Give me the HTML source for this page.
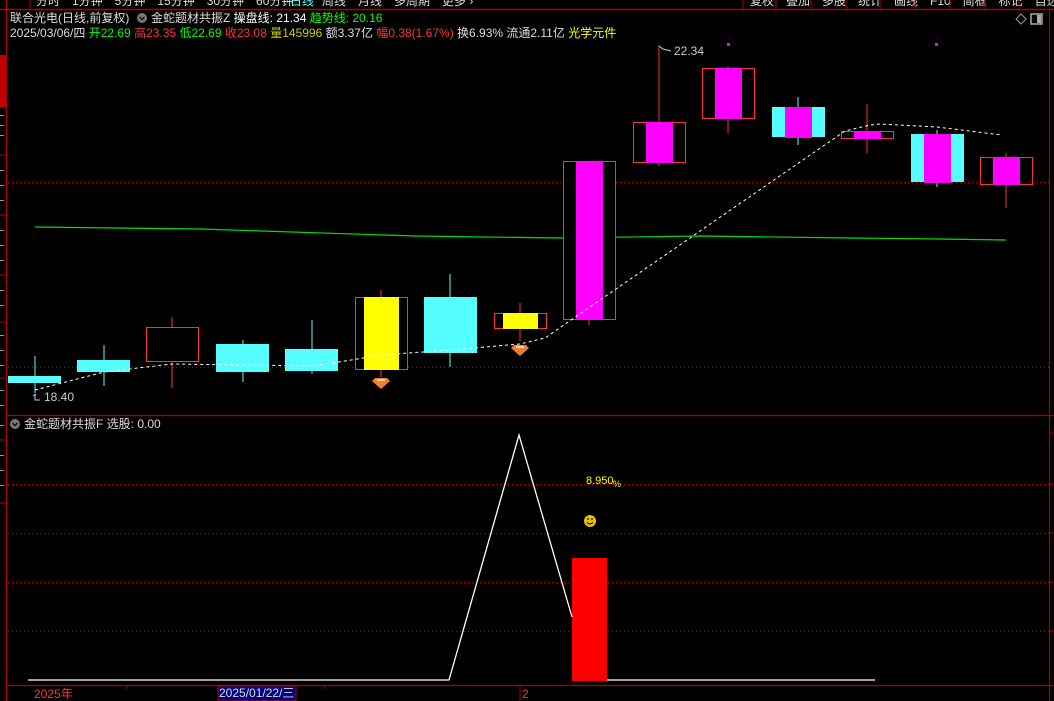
<!DOCTYPE html>
<html><head><meta charset="utf-8"><style>
html,body{margin:0;padding:0;background:#000;width:1054px;height:701px;overflow:hidden;font-family:"Liberation Sans","Noto Sans CJK SC",sans-serif}
.t{position:absolute;font-size:12px;white-space:nowrap;line-height:14px}
</style></head><body>
<svg width="1054" height="701" style="position:absolute;left:0;top:0" font-family="Liberation Sans, Noto Sans CJK SC, sans-serif">
<line x1="0" y1="9.5" x2="1054" y2="9.5" stroke="#b00000" stroke-width="1.5"/>
<g fill="#ddd" font-size="12">
<text x="36" y="5">分时　1分钟　5分钟　15分钟　30分钟　60分钟</text>
<text x="290" y="5" fill="#5ff">日线</text>
<text x="322" y="5">周线　月线　多周期　更多 ›</text>
<text x="750" y="5">复权　叠加　多股　统计　画线　F10　简框　标记　自选</text>
</g>
<g stroke="#b00000"><line x1="30" y1="0" x2="30" y2="9"/><line x1="743" y1="0" x2="743" y2="9"/><line x1="776" y1="0" x2="776" y2="9"/><line x1="811" y1="0" x2="811" y2="9"/><line x1="846" y1="0" x2="846" y2="9"/><line x1="880" y1="0" x2="880" y2="9"/><line x1="915" y1="0" x2="915" y2="9"/><line x1="950" y1="0" x2="950" y2="9"/><line x1="985" y1="0" x2="985" y2="9"/><line x1="1019" y1="0" x2="1019" y2="9"/></g>
<line x1="6.5" y1="0" x2="6.5" y2="701" stroke="#b00000"/>
<rect x="0" y="55" width="6" height="52" fill="#c00000"/>
<g stroke="#b00000"><line x1="0" y1="107" x2="6" y2="107"/><line x1="0" y1="155" x2="6" y2="155"/><line x1="0" y1="215" x2="6" y2="215"/><line x1="0" y1="275" x2="6" y2="275"/><line x1="0" y1="322" x2="6" y2="322"/><line x1="0" y1="378" x2="6" y2="378"/><line x1="0" y1="440" x2="6" y2="440"/><line x1="0" y1="503" x2="6" y2="503"/></g>
<g fill="#999"><rect x="0" y="115" width="4" height="1"/><rect x="0" y="125" width="4" height="1"/><rect x="0" y="135" width="4" height="1"/><rect x="0" y="170" width="4" height="1"/><rect x="0" y="185" width="4" height="1"/><rect x="0" y="200" width="4" height="1"/><rect x="0" y="230" width="4" height="1"/><rect x="0" y="245" width="4" height="1"/><rect x="0" y="260" width="4" height="1"/><rect x="0" y="290" width="4" height="1"/><rect x="0" y="305" width="4" height="1"/><rect x="0" y="335" width="4" height="1"/><rect x="0" y="350" width="4" height="1"/><rect x="0" y="365" width="4" height="1"/><rect x="0" y="390" width="4" height="1"/><rect x="0" y="405" width="4" height="1"/><rect x="0" y="425" width="4" height="1"/><rect x="0" y="455" width="4" height="1"/><rect x="0" y="470" width="4" height="1"/><rect x="0" y="485" width="4" height="1"/></g>
<line x1="7" y1="415.5" x2="1054" y2="415.5" stroke="#b00000" stroke-width="1.2"/>
<line x1="7" y1="685.5" x2="1054" y2="685.5" stroke="#b00000" stroke-width="1.2"/>
<line x1="1049.5" y1="10" x2="1049.5" y2="701" stroke="#b00000" stroke-width="1.2"/>
<g stroke="#b00000"><line x1="1049" y1="433" x2="1054" y2="433"/><line x1="1049" y1="484" x2="1054" y2="484"/><line x1="1049" y1="533" x2="1054" y2="533"/><line x1="1049" y1="582" x2="1054" y2="582"/><line x1="1049" y1="631" x2="1054" y2="631"/></g>
<g stroke="#c00000" stroke-dasharray="1,3"><line x1="8" y1="182.5" x2="1049" y2="182.5"/><line x1="8" y1="367.5" x2="1049" y2="367.5"/><line x1="8" y1="484.5" x2="1049" y2="484.5"/><line x1="8" y1="533.5" x2="1049" y2="533.5"/><line x1="8" y1="582.5" x2="1049" y2="582.5"/><line x1="8" y1="631.5" x2="1049" y2="631.5"/></g>
<polyline points="35,227 200,229 415,236 560,238 700,236 850,238 940,239 1006,240" fill="none" stroke="#00e000" stroke-width="1.2"/>
<g stroke-width="1">
<line x1="35" y1="356" x2="35" y2="393" stroke="#5ff"/>
<line x1="104" y1="345" x2="104" y2="386" stroke="#5ff"/>
<line x1="172" y1="317" x2="172" y2="388" stroke="#f33"/>
<line x1="243" y1="340" x2="243" y2="382" stroke="#5ff"/>
<line x1="312" y1="320" x2="312" y2="374" stroke="#5ff"/>
<line x1="381" y1="290" x2="381" y2="377" stroke="#f33"/>
<line x1="450" y1="274" x2="450" y2="367" stroke="#5ff"/>
<line x1="520" y1="303" x2="520" y2="341" stroke="#f33"/>
<line x1="589" y1="161" x2="589" y2="325" stroke="#f33"/>
<line x1="659" y1="46" x2="659" y2="166" stroke="#f33"/>
<line x1="728" y1="66" x2="728" y2="133" stroke="#f33"/>
<line x1="798" y1="97" x2="798" y2="145" stroke="#5ff"/>
<line x1="867" y1="104" x2="867" y2="153" stroke="#f33"/>
<line x1="937" y1="130" x2="937" y2="187" stroke="#5ff"/>
<line x1="1006" y1="153" x2="1006" y2="208" stroke="#f33"/>
</g>
<rect x="8" y="376" width="53" height="7" fill="#55ffff"/>
<rect x="77" y="360" width="53" height="12" fill="#55ffff"/>
<rect x="146.5" y="327.5" width="52" height="34" fill="#000" stroke="#f33"/>
<rect x="216" y="344" width="53" height="28" fill="#55ffff"/>
<rect x="285" y="349" width="53" height="22" fill="#55ffff"/>
<rect x="355.5" y="297.5" width="52" height="72" fill="#000" stroke="#f33"/>
<rect x="364" y="297" width="35" height="73" fill="#ffff00"/>
<rect x="424" y="297" width="53" height="56" fill="#55ffff"/>
<rect x="494.5" y="313.5" width="52" height="15" fill="#000" stroke="#f33"/>
<rect x="503" y="313" width="35" height="16" fill="#ffff00"/>
<rect x="563.5" y="161.5" width="52" height="158" fill="#000" stroke="#f33"/>
<rect x="576" y="161" width="27" height="159" fill="#ff00ff"/>
<rect x="633.5" y="122.5" width="52" height="40" fill="#000" stroke="#f33"/>
<rect x="646" y="122" width="27" height="41" fill="#ff00ff"/>
<rect x="702.5" y="68.5" width="52" height="50" fill="#000" stroke="#f33"/>
<rect x="715" y="68" width="27" height="51" fill="#ff00ff"/>
<rect x="772" y="107" width="53" height="30" fill="#55ffff"/>
<rect x="785" y="107" width="27" height="31" fill="#ff00ff"/>
<rect x="841.5" y="131.5" width="52" height="7" fill="#000" stroke="#f33"/>
<rect x="854" y="131" width="27" height="8" fill="#ff00ff"/>
<rect x="911" y="134" width="53" height="48" fill="#55ffff"/>
<rect x="924" y="134" width="27" height="49" fill="#ff00ff"/>
<rect x="980.5" y="157.5" width="52" height="27" fill="#000" stroke="#f33"/>
<rect x="993" y="157" width="27" height="28" fill="#ff00ff"/>
<rect x="727" y="43" width="3" height="3" fill="#f0f"/>
<rect x="935" y="43" width="3" height="3" fill="#f0f"/>
<polyline points="35,390 104,372 172,364 243,365 312,366 345,361 381,355 450,350 520,344 545,338 845,131 870,125 880,124 937,127 1002,135" fill="none" stroke="#fff" stroke-dasharray="3,3" stroke-width="1"/>
<g fill="#f08030"><path d="M375,378 h12 l3,3 -9,8 -9,-8z"/><path d="M514,345 h12 l3,3 -9,8 -9,-8z"/></g>
<g fill="#ffd0a0"><rect x="377" y="379" width="8" height="2"/><rect x="516" y="346" width="8" height="2"/></g>
<path d="M33,396 l3,-2 M35,394 v6 h5" fill="none" stroke="#ccc"/>
<text x="44" y="401" fill="#ccc" font-size="12">18.40</text>
<path d="M659,46 l4,3 l8,2" fill="none" stroke="#ccc"/>
<text x="674" y="55" fill="#ccc" font-size="12">22.34</text>
<path d="M1021,14 l5,5 -5,5 -5,-5z" fill="none" stroke="#999"/>
<rect x="1031" y="14" width="11" height="10" fill="none" stroke="#aaa" stroke-width="1.5"/><rect x="1037" y="15" width="4" height="8" fill="#aaa"/>
<circle cx="15" cy="424" r="5" fill="#777"/><path d="M12.5,423 l2.5,2.5 2.5,-2.5" fill="none" stroke="#000" stroke-width="1.2"/>
<circle cx="142" cy="18" r="5" fill="#777"/><path d="M139.5,17 l2.5,2.5 2.5,-2.5" fill="none" stroke="#000" stroke-width="1.2"/>
<rect x="572" y="558" width="35" height="123" fill="#ff0000"/>
<polyline points="28,680 449,680 519,435 572,617" fill="none" stroke="#fff" stroke-width="1.3"/>
<line x1="607" y1="680" x2="875" y2="680" stroke="#fff" stroke-width="1.3"/>
<text x="586" y="484" fill="#ff0" font-size="11">8.950</text><text x="613" y="487" fill="#ff0" font-size="9">%</text>
<circle cx="590" cy="521" r="6" fill="#e8c000"/><circle cx="588" cy="519" r="0.9" fill="#000"/><circle cx="592" cy="519" r="0.9" fill="#000"/><path d="M587,522.5 q3,3 6,0" fill="none" stroke="#000" stroke-width="0.9"/>
<g stroke="#b00000"><line x1="127" y1="686" x2="127" y2="689"/><line x1="325" y1="686" x2="325" y2="689"/><line x1="520" y1="686" x2="520" y2="701"/></g>
<text x="34" y="698" fill="#f33" font-size="12">2025年</text>
<rect x="218" y="686" width="78" height="15" fill="#000080" stroke="#b00000"/>
<text x="219" y="697" fill="#ddd" font-size="12">2025/01/22/三</text>
<text x="522" y="698" fill="#f33" font-size="12">2</text>
</svg>
<div class="t" style="left:10px;top:11px;color:#ddd">联合光电(日线,前复权)</div>
<div class="t" style="left:151px;top:11px;color:#ddd">金蛇题材共振Z <span style="color:#fff">操盘线: 21.34</span> <span style="color:#0f0">趋势线: 20.16</span></div>
<div class="t" style="left:10px;top:26px;color:#ddd">2025/03/06/四 <span style="color:#0f0">开22.69</span> <span style="color:#f33">高23.35</span> <span style="color:#0f0">低22.69</span> <span style="color:#f33">收23.08</span> <span style="color:#cc0">量145996</span> 额3.37亿 <span style="color:#f33">幅0.38(1.67%)</span> 换6.93% 流通2.11亿 <span style="color:#ff0">光学元件</span></div>
<div class="t" style="left:24px;top:417px;color:#ddd">金蛇题材共振F 选股: 0.00</div>
</body></html>
